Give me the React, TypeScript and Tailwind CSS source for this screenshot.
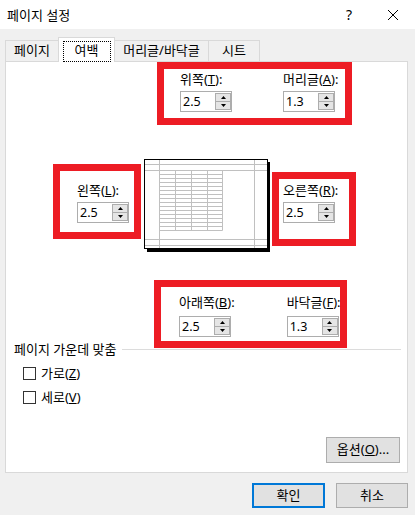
function Arrow({ up }: { up?: boolean }) {
  return (
    <svg width="5" height="3" viewBox="0 0 5 3">
      <path d={up ? "M2.5 0L5 3H0Z" : "M0 0H5L2.5 3Z"} fill="#000" />
    </svg>
  );
}

function Spin({ v }: { v: string }) {
  return (
    <div className="flex h-[21px] w-[52px] border border-[#adadad] bg-white">
      <span className="flex-1 pl-[2px] text-[12.5px] leading-[19px]">{v}</span>
      <div className="flex w-[16px] flex-col py-[1px]">
        <div className="flex flex-1 items-center justify-center border border-[#adadad] bg-[#e5e5e5]">
          <Arrow up />
        </div>
        <div className="-mt-px flex flex-1 items-center justify-center border border-[#adadad] bg-[#e5e5e5]">
          <Arrow />
        </div>
      </div>
    </div>
  );
}

function Field({ label, k, v, mt }: { label: string; k: string; v: string; mt: string }) {
  return (
    <div className="flex flex-col">
      <span className="leading-[16px] whitespace-nowrap">
        {label}(<span className="underline">{k}</span>):
      </span>
      <div className={mt}>
        <Spin v={v} />
      </div>
    </div>
  );
}

function Preview() {
  const rows = Array.from({ length: 16 }, (_, i) => 11.5 + i * 4);
  const cols = [15.5, 31.5, 47.5, 63.5, 78.5];
  return (
    <svg width="126" height="93" viewBox="0 0 126 93" className="shrink-0">
      <rect x="0.5" y="0.5" width="123" height="89" fill="#fff" stroke="#000" />
      <rect x="124" y="3" width="2" height="90" fill="#000" />
      <rect x="3" y="90" width="123" height="3" fill="#000" />
      <g stroke="#c0c0c0" strokeWidth="1">
        {[5.5, 11.5, 80.5, 86.5].map((y) => (
          <line key={"h" + y} x1="1" x2="123" y1={y} y2={y} />
        ))}
        {[15.5, 110.5].map((x) => (
          <line key={"v" + x} x1={x} x2={x} y1="1" y2="89" />
        ))}
        {rows.map((y) => (
          <line key={"r" + y} x1="15.5" x2="78.5" y1={y} y2={y} />
        ))}
        {cols.map((x) => (
          <line key={"c" + x} x1={x} x2={x} y1="11.5" y2="71.5" />
        ))}
      </g>
    </svg>
  );
}

function Check({ label, k }: { label: string; k: string }) {
  return (
    <div className="flex h-[16px] items-center pl-[17px]">
      <span className="h-[13px] w-[13px] border border-[#333] bg-white" />
      <span className="ml-[5px] leading-[16px]">
        {label}(<span className="underline">{k}</span>)
      </span>
    </div>
  );
}

export default function App() {
  return (
    <div className="h-[515px] w-[415px] overflow-hidden bg-[#f0f0f0] font-['Noto_Sans','Noto_Sans_CJK_KR',sans-serif] text-[13px] text-black">
      {/* title bar */}
      <div className="flex h-[29px] items-center bg-white pl-[7px]">
        <span className="leading-[16px]">페이지 설정</span>
        <span className="ml-auto text-[14px] leading-[16px]">?</span>
        <svg width="10" height="10" viewBox="0 0 10 10" className="ml-[36px] mr-[17px]">
          <path d="M0 0L10 10M10 0L0 10" stroke="#000" strokeWidth="1" />
        </svg>
      </div>

      {/* tabs */}
      <div className="-mb-px flex items-end pl-[5px] pt-[8px]">
        <div className="flex h-[22px] w-[54px] items-center justify-center border border-[#d9d9d9] pb-px">페이지</div>
        <div className="relative z-10 -ml-px flex h-[25px] w-[57px] items-end justify-center border border-b-0 border-[#d9d9d9] bg-white">
          <span className="flex h-[21px] w-[48px] items-center justify-center border border-dotted border-black pb-[2px]">
            여백
          </span>
        </div>
        <div className="-ml-px flex h-[22px] w-[95px] items-center justify-center border border-[#d9d9d9] pb-px">머리글/바닥글</div>
        <div className="-ml-px flex h-[22px] w-[52px] items-center justify-center border border-[#d9d9d9] pb-px">시트</div>
      </div>

      {/* panel */}
      <div className="ml-[5px] flex h-[412px] w-[403px] flex-col border border-[#d9d9d9] bg-white">
        <div className="relative z-10 ml-[151px] h-[63px] w-[195px] border-[7px] border-[#ed1c24]">
          <div className="flex gap-[51px] pl-[16px] pt-[2px]">
            <Field label="위쪽" k="T" v="2.5" mt="mt-[4px]" />
            <Field label="머리글" k="A" v="1.3" mt="mt-[4px]" />
          </div>
        </div>

        <div className="mt-[34px] flex items-start">
          <div className="relative z-10 ml-[47px] mt-[5px] h-[75px] w-[88px] border-[7px] border-[#ed1c24]">
            <div className="pl-[17px] pt-[11px]">
              <Field label="왼쪽" k="L" v="2.5" mt="mt-[4px]" />
            </div>
          </div>
          <div className="ml-[3px]">
            <Preview />
          </div>
          <div className="relative z-10 ml-[2px] mt-[13px] h-[74px] w-[84px] border-[7px] border-[#ed1c24]">
            <div className="pl-[4px] pt-[3px]">
              <Field label="오른쪽" k="R" v="2.5" mt="mt-[4px]" />
            </div>
          </div>
        </div>

        <div className="relative z-10 ml-[148px] mt-[28px] h-[68px] w-[193px] border-[7px] border-[#ed1c24]">
          <div className="flex gap-[52px] pl-[18px] pt-[7px]">
            <Field label="아래쪽" k="B" v="2.5" mt="mt-[6px]" />
            <Field label="바닥글" k="F" v="1.3" mt="mt-[6px]" />
          </div>
        </div>

        <div className="-mt-[7px] flex h-[16px] items-center pl-[8px] pr-[6px]">
          <span className="leading-[16px]">페이지 가운데 맞춤</span>
          <span className="ml-[6px] h-px flex-1 bg-[#dcdcdc]" />
        </div>

        <div className="mt-[8px] flex flex-col gap-[8px]">
          <Check label="가로" k="Z" />
          <Check label="세로" k="V" />
        </div>

        <button className="mb-[9px] mr-[7px] mt-auto flex h-[26px] w-[74px] items-center justify-center self-end border border-[#adadad] bg-[#e1e1e1]">
          옵션(<span className="underline">O</span>)...
        </button>
      </div>

      {/* bottom buttons */}
      <div className="mt-[10px] flex justify-end gap-[11px] pr-[7px]">
        <button className="flex h-[25px] w-[73px] items-center justify-center border-2 border-[#0078d7] bg-[#e1e1e1]">
          확인
        </button>
        <button className="flex h-[25px] w-[72px] items-center justify-center border border-[#adadad] bg-[#e1e1e1]">
          취소
        </button>
      </div>
    </div>
  );
}
